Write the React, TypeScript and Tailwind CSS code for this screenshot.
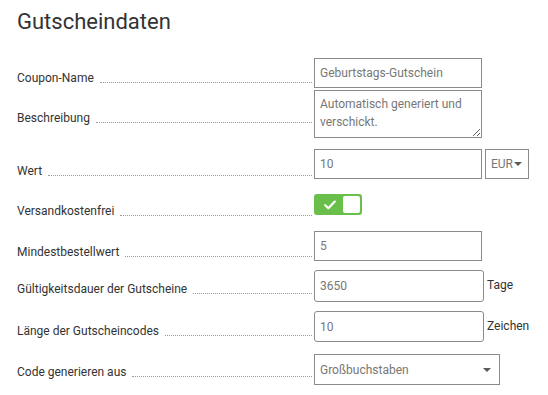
import React from "react";

function Caret({ className }: { className?: string }) {
  return (
    <svg width="8" height="4" viewBox="0 0 8 4" className={className}>
      <path d="M0 0 L8 0 L4 4 Z" fill="#5a5a5a" />
    </svg>
  );
}

function Label({ text, pad }: { text: string; pad: string }) {
  return (
    <div className={`flex w-[297px] shrink-0 items-end ${pad}`}>
      <span className="whitespace-nowrap text-[12px] leading-[16px] text-[#333]">{text}</span>
      <span className="mb-[3px] ml-[6px] mr-[2px] flex-1 border-b border-dotted border-[#9a9a9a]" />
    </div>
  );
}

export default function App() {
  return (
    <div className="h-[395px] w-[548px] overflow-hidden bg-white pl-[17px] font-['Roboto',sans-serif]">
      <h1 className="pt-[9px] text-[22px] font-normal leading-[26px] text-[#333]">Gutscheindaten</h1>

      <div className="mt-[23px] flex items-start">
        <Label text="Coupon-Name" pad="pt-[12px]" />
        <input
          readOnly
          defaultValue="Geburtstags-Gutschein"
          className="h-[30px] w-[168px] border border-[#8a8a8a] bg-white px-[5px] text-[12px] text-[#777] outline-none"
        />
      </div>

      <div className="mt-[2px] flex items-start">
        <Label text="Beschreibung" pad="pt-[20px]" />
        <textarea
          readOnly
          defaultValue="Automatisch generiert und verschickt."
          className="h-[48px] w-[168px] border border-[#8a8a8a] bg-white px-[5px] pt-[4px] text-[12px] leading-[18px] text-[#777] outline-none"
        />
      </div>

      <div className="mt-[11px] flex items-start">
        <Label text="Wert" pad="pt-[14px]" />
        <input
          readOnly
          defaultValue="10"
          className="h-[30px] w-[168px] border border-[#8a8a8a] bg-white px-[5px] text-[12px] text-[#777] outline-none"
        />
        <div className="ml-[3px] flex h-[30px] w-[44px] items-center border border-[#8a8a8a] pl-[5px] text-[12px] text-[#777]">
          <span>EUR</span>
          <Caret className="ml-[1px]" />
        </div>
      </div>

      <div className="mt-[15px] flex h-[21px] items-start">
        <Label text="Versandkostenfrei" pad="pt-[9px]" />
        <div className="flex h-[21px] w-[48px] items-center rounded-[3px] bg-[#6abf4b] pl-[10px] pr-[2px]">
          <svg width="12" height="10" viewBox="0 0 12 10">
            <path d="M1.2 5.2 L4.4 8.2 L10.8 1.6" fill="none" stroke="#fff" strokeWidth="2.2" strokeLinecap="round" strokeLinejoin="round" />
          </svg>
          <div className="ml-auto h-[17px] w-[17px] rounded-[2px] bg-white" />
        </div>
      </div>

      <div className="mt-[16px] flex items-start">
        <Label text="Mindestbestellwert" pad="pt-[13px]" />
        <input
          readOnly
          defaultValue="5"
          className="h-[30px] w-[168px] border border-[#8a8a8a] bg-white px-[5px] text-[12px] text-[#777] outline-none"
        />
      </div>

      <div className="mt-[9px] flex items-start">
        <Label text="Gültigkeitsdauer der Gutscheine" pad="pt-[11px]" />
        <input
          readOnly
          defaultValue="3650"
          className="h-[32px] w-[170px] rounded-[3px] border border-[#8a8a8a] bg-white px-[5px] text-[12px] text-[#777] outline-none"
        />
        <span className="ml-[3px] pt-[7px] text-[12px] leading-[16px] text-[#333]">Tage</span>
      </div>

      <div className="mt-[9px] flex items-start">
        <Label text="Länge der Gutscheincodes" pad="pt-[12px]" />
        <input
          readOnly
          defaultValue="10"
          className="h-[31px] w-[170px] rounded-[3px] border border-[#8a8a8a] bg-white px-[5px] text-[12px] text-[#777] outline-none"
        />
        <span className="ml-[3px] pt-[7px] text-[12px] leading-[16px] text-[#333]">Zeichen</span>
      </div>

      <div className="mt-[12px] flex items-start">
        <Label text="Code generieren aus" pad="pt-[10px]" />
        <div className="flex h-[31px] w-[186px] items-center border border-[#8a8a8a] bg-white pl-[5px] pr-[8px] text-[12px] text-[#777]">
          <span>Großbuchstaben</span>
          <Caret className="ml-auto" />
        </div>
      </div>
    </div>
  );
}
